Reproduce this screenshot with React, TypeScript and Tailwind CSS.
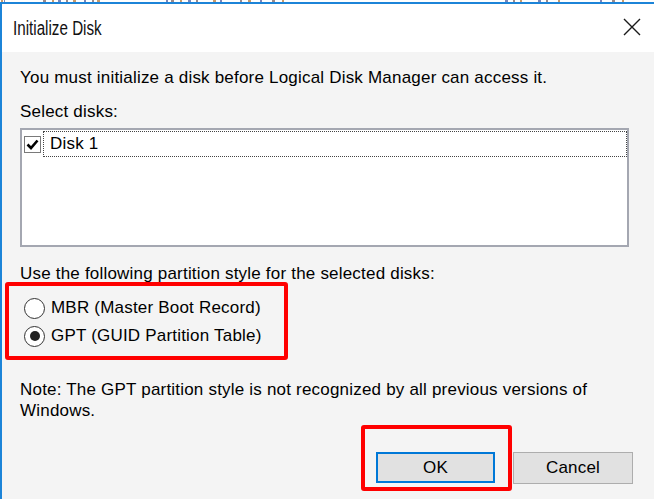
import React from "react";

const font = { fontFamily: '"Liberation Sans", Arial, sans-serif' };

function Radio({ checked }: { checked?: boolean }) {
  return (
    <div className="w-[21px] h-[21px] rounded-full border border-[#333] bg-white flex items-center justify-center shrink-0">
      {checked && <div className="w-[10px] h-[10px] rounded-full bg-[#222]" />}
    </div>
  );
}

const frags: [number, number][] = [
  [1, 2], [4, 1], [43, 3], [52, 2], [58, 3], [66, 2], [73, 3], [84, 2], [92, 2], [97, 3],
  [166, 2], [171, 3], [180, 2], [188, 3], [196, 2], [213, 3], [220, 2], [240, 2], [248, 3],
  [260, 2], [272, 3], [282, 2], [505, 3], [513, 2], [520, 2], [538, 3], [546, 2], [558, 2],
  [600, 2], [612, 3], [622, 2], [660, 2],
];

export default function App() {
  return (
    <div
      className="relative w-[654px] h-[499px] overflow-hidden bg-white text-black text-[17px] leading-[20px] tracking-[0.2px]"
      style={font}
    >
      {/* background fragments */}
      <div className="relative h-[2px] overflow-hidden bg-white">
        {frags.map(([x, w], i) => (
          <div
            key={i}
            className={"absolute top-0 h-[2px] " + (i % 3 === 0 ? "bg-[#c79a6a]" : i % 3 === 1 ? "bg-[#7a86b8]" : "bg-[#9a8a8a]")}
            style={{ left: x, width: w }}
          />
        ))}
      </div>
      <div className="border-t-2 border-l-2 border-[#1c84d8] h-[497px] flex flex-col">
        {/* title bar */}
        <div className="h-[48px] bg-white flex items-center justify-between pl-[11px] pr-[13px] shrink-0">
          <span className="inline-block origin-left scale-x-[0.76] text-[20px] tracking-normal text-[#111] -mt-[1px]">
            Initialize Disk
          </span>
          <svg width="18" height="18" viewBox="0 0 18 18" className="-mt-[3px]">
            <path d="M1 1 L17 17 M17 1 L1 17" stroke="#1a1a1a" strokeWidth="1.4" />
          </svg>
        </div>
        {/* body */}
        <div className="flex-1 bg-[#f4f4f4] pl-[18px] pr-[25px] pt-[16px] flex flex-col">
          <div>You must initialize a disk before Logical Disk Manager can access it.</div>
          <div className="mt-[14px]">Select disks:</div>
          <div className="mt-[6px] h-[119px] border-2 border-[#a4a7b1] bg-white pt-[1px]">
            <div className="flex items-center">
              <div className="ml-[2px] mr-[2px] w-[17px] h-[17px] border border-[#7a7a7a] bg-white flex items-center justify-center shrink-0 mt-[1px]">
                <svg width="13" height="13" viewBox="0 0 13 13">
                  <path d="M1.5 6.5 L5 10 L11.5 2.5" stroke="#000" strokeWidth="2.6" fill="none" />
                </svg>
              </div>
              <div className="flex-1 h-[26px] border border-dotted border-[#444] pl-[6px] flex items-center">
                Disk 1
              </div>
            </div>
          </div>
          <div className="mt-[17px]">Use the following partition style for the selected disks:</div>
          <div className="mt-[10px] flex flex-col">
            <div className="h-[28px] flex items-center gap-[6px] pl-[4px]">
              <Radio />
              <span>MBR (Master Boot Record)</span>
            </div>
            <div className="h-[28px] flex items-center gap-[6px] pl-[4px]">
              <Radio checked />
              <span>GPT (GUID Partition Table)</span>
            </div>
          </div>
          <div className="mt-[29px] leading-[21px]">
            Note: The GPT partition style is not recognized by all previous versions of
            <br />
            Windows.
          </div>
          <div className="mt-[31px] flex justify-end gap-[18px] -mr-[4px]">
            <button className="w-[119px] h-[31px] border-2 border-[#0078d7] bg-[#e1e1e1] text-black flex items-center justify-center">
              OK
            </button>
            <button className="w-[120px] h-[32px] border border-[#adadad] bg-[#e1e1e1] text-black flex items-center justify-center">
              Cancel
            </button>
          </div>
        </div>
      </div>
      {/* red annotation boxes */}
      <div className="absolute left-[5px] top-[282px] w-[283px] h-[78px] border-4 border-[#f00] rounded-[3px]" />
      <div className="absolute left-[361px] top-[425px] w-[151px] h-[66px] border-4 border-[#f00] rounded-[3px]" />
    </div>
  );
}
